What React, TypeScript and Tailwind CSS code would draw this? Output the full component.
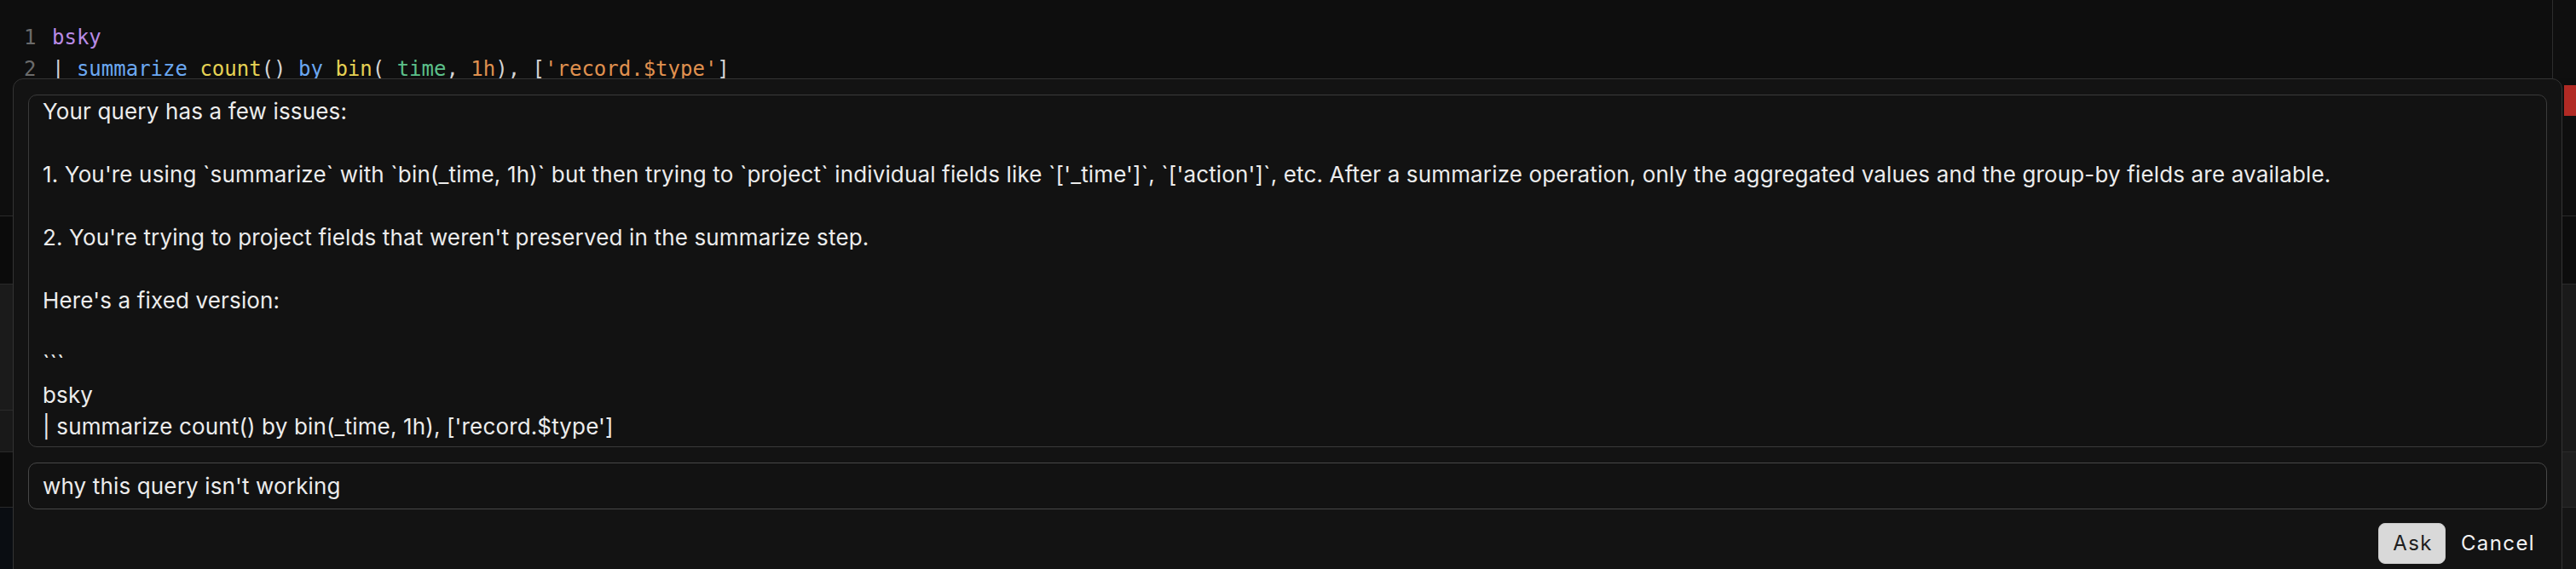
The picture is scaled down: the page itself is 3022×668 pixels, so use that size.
import React from 'react';

const answer = `Your query has a few issues:

1. You're using \`summarize\` with \`bin(_time, 1h)\` but then trying to \`project\` individual fields like \`['_time']\`, \`['action']\`, etc. After a summarize operation, only the aggregated values and the group-by fields are available.

2. You're trying to project fields that weren't preserved in the summarize step.

Here's a fixed version:

\`\`\`
bsky
| summarize count() by bin(_time, 1h), ['record.$type']
\`\`\``;

function CodeLine({ n, children }: { n: number; children: React.ReactNode }) {
  return (
    <div className="flex">
      <span className="w-[33px] shrink-0 text-[#6b6b6b]">{n}</span>
      <span className="whitespace-pre">{children}</span>
    </div>
  );
}

export default function App() {
  return (
    <div className="relative h-[668px] w-[3022px] overflow-hidden bg-[#0e0e0e]">
      {/* editor */}
      <div className="flex h-[92px]">
        <div className="w-[2995px] shrink-0 border-r border-[#2c2c2c] pl-[28px] pt-[26px] font-['DejaVu_Sans_Mono',monospace] text-[24px] leading-[37px] text-[#d4d4d4]">
          <CodeLine n={1}>
            <span className="text-[#b98be6]">bsky</span>
          </CodeLine>
          <CodeLine n={2}>
            <span>| </span>
            <span className="text-[#6ba8f2]">summarize</span>{' '}
            <span className="text-[#e6d254]">count</span>(){' '}
            <span className="text-[#6ba8f2]">by</span>{' '}
            <span className="text-[#e6d254]">bin</span>(
            <span className="text-[#5cc08a]">_time</span>,{' '}
            <span className="text-[#e0914f]">1h</span>), [
            <span className="text-[#e0914f]">'record.$type'</span>]
          </CodeLine>
        </div>
        <div className="flex-1 bg-[#0f0f0f]" />
      </div>

      {/* results area behind the panel */}
      <div className="flex h-[576px]">
        <div className="flex w-[15px] flex-col">
          <div className="h-[161px] bg-[#0e0e0e]" />
          <div className="h-[80px] border-t border-[#2a2a2a] bg-[#0b0b0b]" />
          <div className="h-[148px] border-t border-[#2a2a2a] bg-[#1b1b1b]" />
          <div className="h-[49px] border-t border-[#2a2a2a] bg-[#191919]" />
          <div className="h-[65px] border-t border-[#2a2a2a] bg-[#0b0b0b]" />
          <div className="flex-1 border-t border-[#2a2a2a] bg-[#0a0d12]" />
        </div>
        <div className="flex-1" />
        <div className="flex w-[17px] flex-col">
          <div className="h-[161px] bg-[#0e0e0e] pl-[3px] pt-[8px]">
            <div className="h-[36px] w-[14px] bg-[#b12a24]" />
          </div>
          <div className="h-[80px] border-t border-[#2a2a2a] bg-[#0d0d0d]" />
          <div className="h-[197px] border-t border-[#2a2a2a] bg-[#1a1a1a]" />
          <div className="h-[65px] border-t border-[#2a2a2a] bg-[#1e1e1e]" />
          <div className="flex-1 border-t border-[#2a2a2a] bg-[#151515]" />
        </div>
      </div>

      {/* ask panel */}
      <div className="absolute left-[15px] top-[92px] h-[600px] w-[2991px] rounded-[12px] border border-[#333333] bg-[#131313] px-[17px] pt-[18px] font-['Inter',sans-serif]">
        <div className="h-[414px] overflow-hidden whitespace-pre-wrap rounded-[10px] border border-[#3a3a3a] bg-[#121212] pl-4 pr-4 text-[26px] leading-[37px] tracking-[0.15px] text-[#ececec]">
          {answer}
        </div>
        <div className="mt-[18px] flex h-[55px] items-center rounded-[10px] border border-[#474747] bg-[#121212] pl-4 text-[26px] tracking-[0.15px] text-[#ececec]">
          why this query isn't working
        </div>
        <div className="mt-[16px] flex justify-end gap-[2px]">
          <button className="h-[48px] rounded-[8px] border border-[#c9c9c9] bg-[#d9d9d9] pl-4 pr-[14px] text-[24px] tracking-[1.4px] text-[#1e1e1e]">
            Ask
          </button>
          <button className="h-[48px] pl-4 pr-[14px] text-[24px] tracking-[1.4px] text-[#f2f2f2]">
            Cancel
          </button>
        </div>
      </div>
    </div>
  );
}
